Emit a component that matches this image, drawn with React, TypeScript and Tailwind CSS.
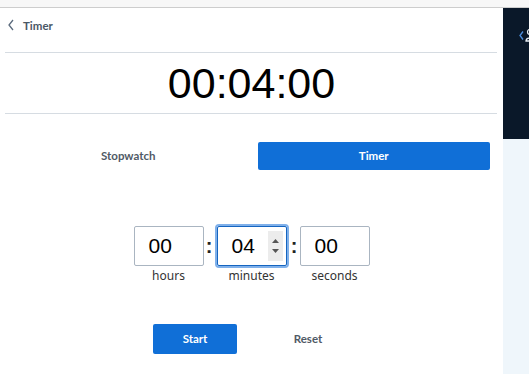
import React from "react";

const ui = { fontFamily: "Lato, 'Noto Sans', sans-serif" };
const arial = { fontFamily: "'Liberation Sans', Arial, sans-serif" };

function Box({ value, label, focused }: { value: string; label: string; focused?: boolean }) {
  return (
    <div className="flex flex-col items-center">
      {focused ? (
        <div className="w-[74px] h-[44px] rounded-[4px] border-2 border-[#7fb0ea] flex">
          <div className="flex-1 rounded-[2px] border border-[#1565c0] flex items-center pl-[14px] pr-[3px]">
            <span className="text-[21px] text-black flex-1" style={arial}>{value}</span>
            <div className="w-[15px] h-[30px] bg-[#ececec] flex flex-col items-center justify-center gap-[6px]">
              <svg width="7" height="4" viewBox="0 0 7 4"><path d="M0 4 L3.5 0 L7 4 Z" fill="#555" /></svg>
              <svg width="7" height="4" viewBox="0 0 7 4"><path d="M0 0 L3.5 4 L7 0 Z" fill="#555" /></svg>
            </div>
          </div>
        </div>
      ) : (
        <div className="w-[70px] h-[40px] my-[2px] rounded-[2px] border border-[#aab5c1] flex items-center pl-[14px]">
          <span className="text-[21px] text-black" style={arial}>{value}</span>
        </div>
      )}
      <div className="text-[12px] text-[#333] leading-[14px] mt-[1px]" style={{ fontFamily: "'Noto Sans', sans-serif" }}>
        {label}
      </div>
    </div>
  );
}

function Colon() {
  return (
    <div className="w-[11px] h-[44px] flex items-center justify-center text-[20px] font-bold text-[#222]" style={arial}>
      :
    </div>
  );
}

export default function App() {
  return (
    <div className="w-[529px] h-[374px] bg-white flex flex-col overflow-hidden" style={ui}>
      <div className="h-[8px] bg-[#f7f7f7] border-b border-[#cdcdcd] shrink-0" />
      <div className="flex flex-1">
        <div className="w-[503px] flex flex-col">
          <div className="h-[44px] flex items-start pt-[9px] pl-[8px] gap-[9px]">
            <svg width="6" height="12" viewBox="0 0 6 12" className="mt-[2px]">
              <path d="M5 1 L1 6 L5 11" fill="none" stroke="#5b6b7d" strokeWidth="1.3" />
            </svg>
            <span className="text-[11.5px] font-bold text-[#4a5866]">Timer</span>
          </div>
          <div className="mx-[5px] w-[492px] border-t border-[#d6dce2]" />
          <div className="h-[60px] flex items-center justify-center text-[43px] text-black leading-none" style={arial}>
            00:04:00
          </div>
          <div className="mx-[5px] w-[492px] border-t border-[#d6dce2]" />
          <div className="grid grid-cols-2 gap-[13px] pl-[12px] pr-[13px] mt-[28px]">
            <div className="h-[28px] flex items-center justify-center text-[11.5px] font-bold text-[#505a66]">
              Stopwatch
            </div>
            <div className="h-[28px] rounded-[2px] bg-[#106fd7] flex items-center justify-center text-[11.5px] font-bold text-white">
              Timer
            </div>
          </div>
          <div className="flex justify-center items-start mt-[54px]">
            <Box value="00" label="hours" />
            <Colon />
            <Box value="04" label="minutes" focused />
            <Colon />
            <Box value="00" label="seconds" />
          </div>
          <div className="flex justify-center gap-[29px] mt-[41px]">
            <div className="w-[84px] h-[30px] rounded-[2px] bg-[#106fd7] flex items-center justify-center text-[11.5px] font-bold text-white">
              Start
            </div>
            <div className="w-[84px] h-[30px] flex items-center justify-center text-[11.5px] font-bold text-[#505a66]">
              Reset
            </div>
          </div>
        </div>
        <div className="w-[26px] flex flex-col">
          <div className="h-[131px] bg-[#0a1829] relative overflow-hidden">
            <svg width="30" height="20" viewBox="0 0 30 20" className="absolute left-[12px] top-[20px]">
              <path d="M8 3.5 L5 7.5 L8 11.5" fill="none" stroke="#4d8fe0" strokeWidth="1.3" />
              <circle cx="15" cy="4" r="2.5" fill="none" stroke="#e8eef5" strokeWidth="1.3" />
              <path d="M11 13 C11 9 19 9 19 13 Z" fill="none" stroke="#e8eef5" strokeWidth="1.3" />
            </svg>
          </div>
          <div className="flex-1 bg-[#eff6fb]" />
        </div>
      </div>
    </div>
  );
}
